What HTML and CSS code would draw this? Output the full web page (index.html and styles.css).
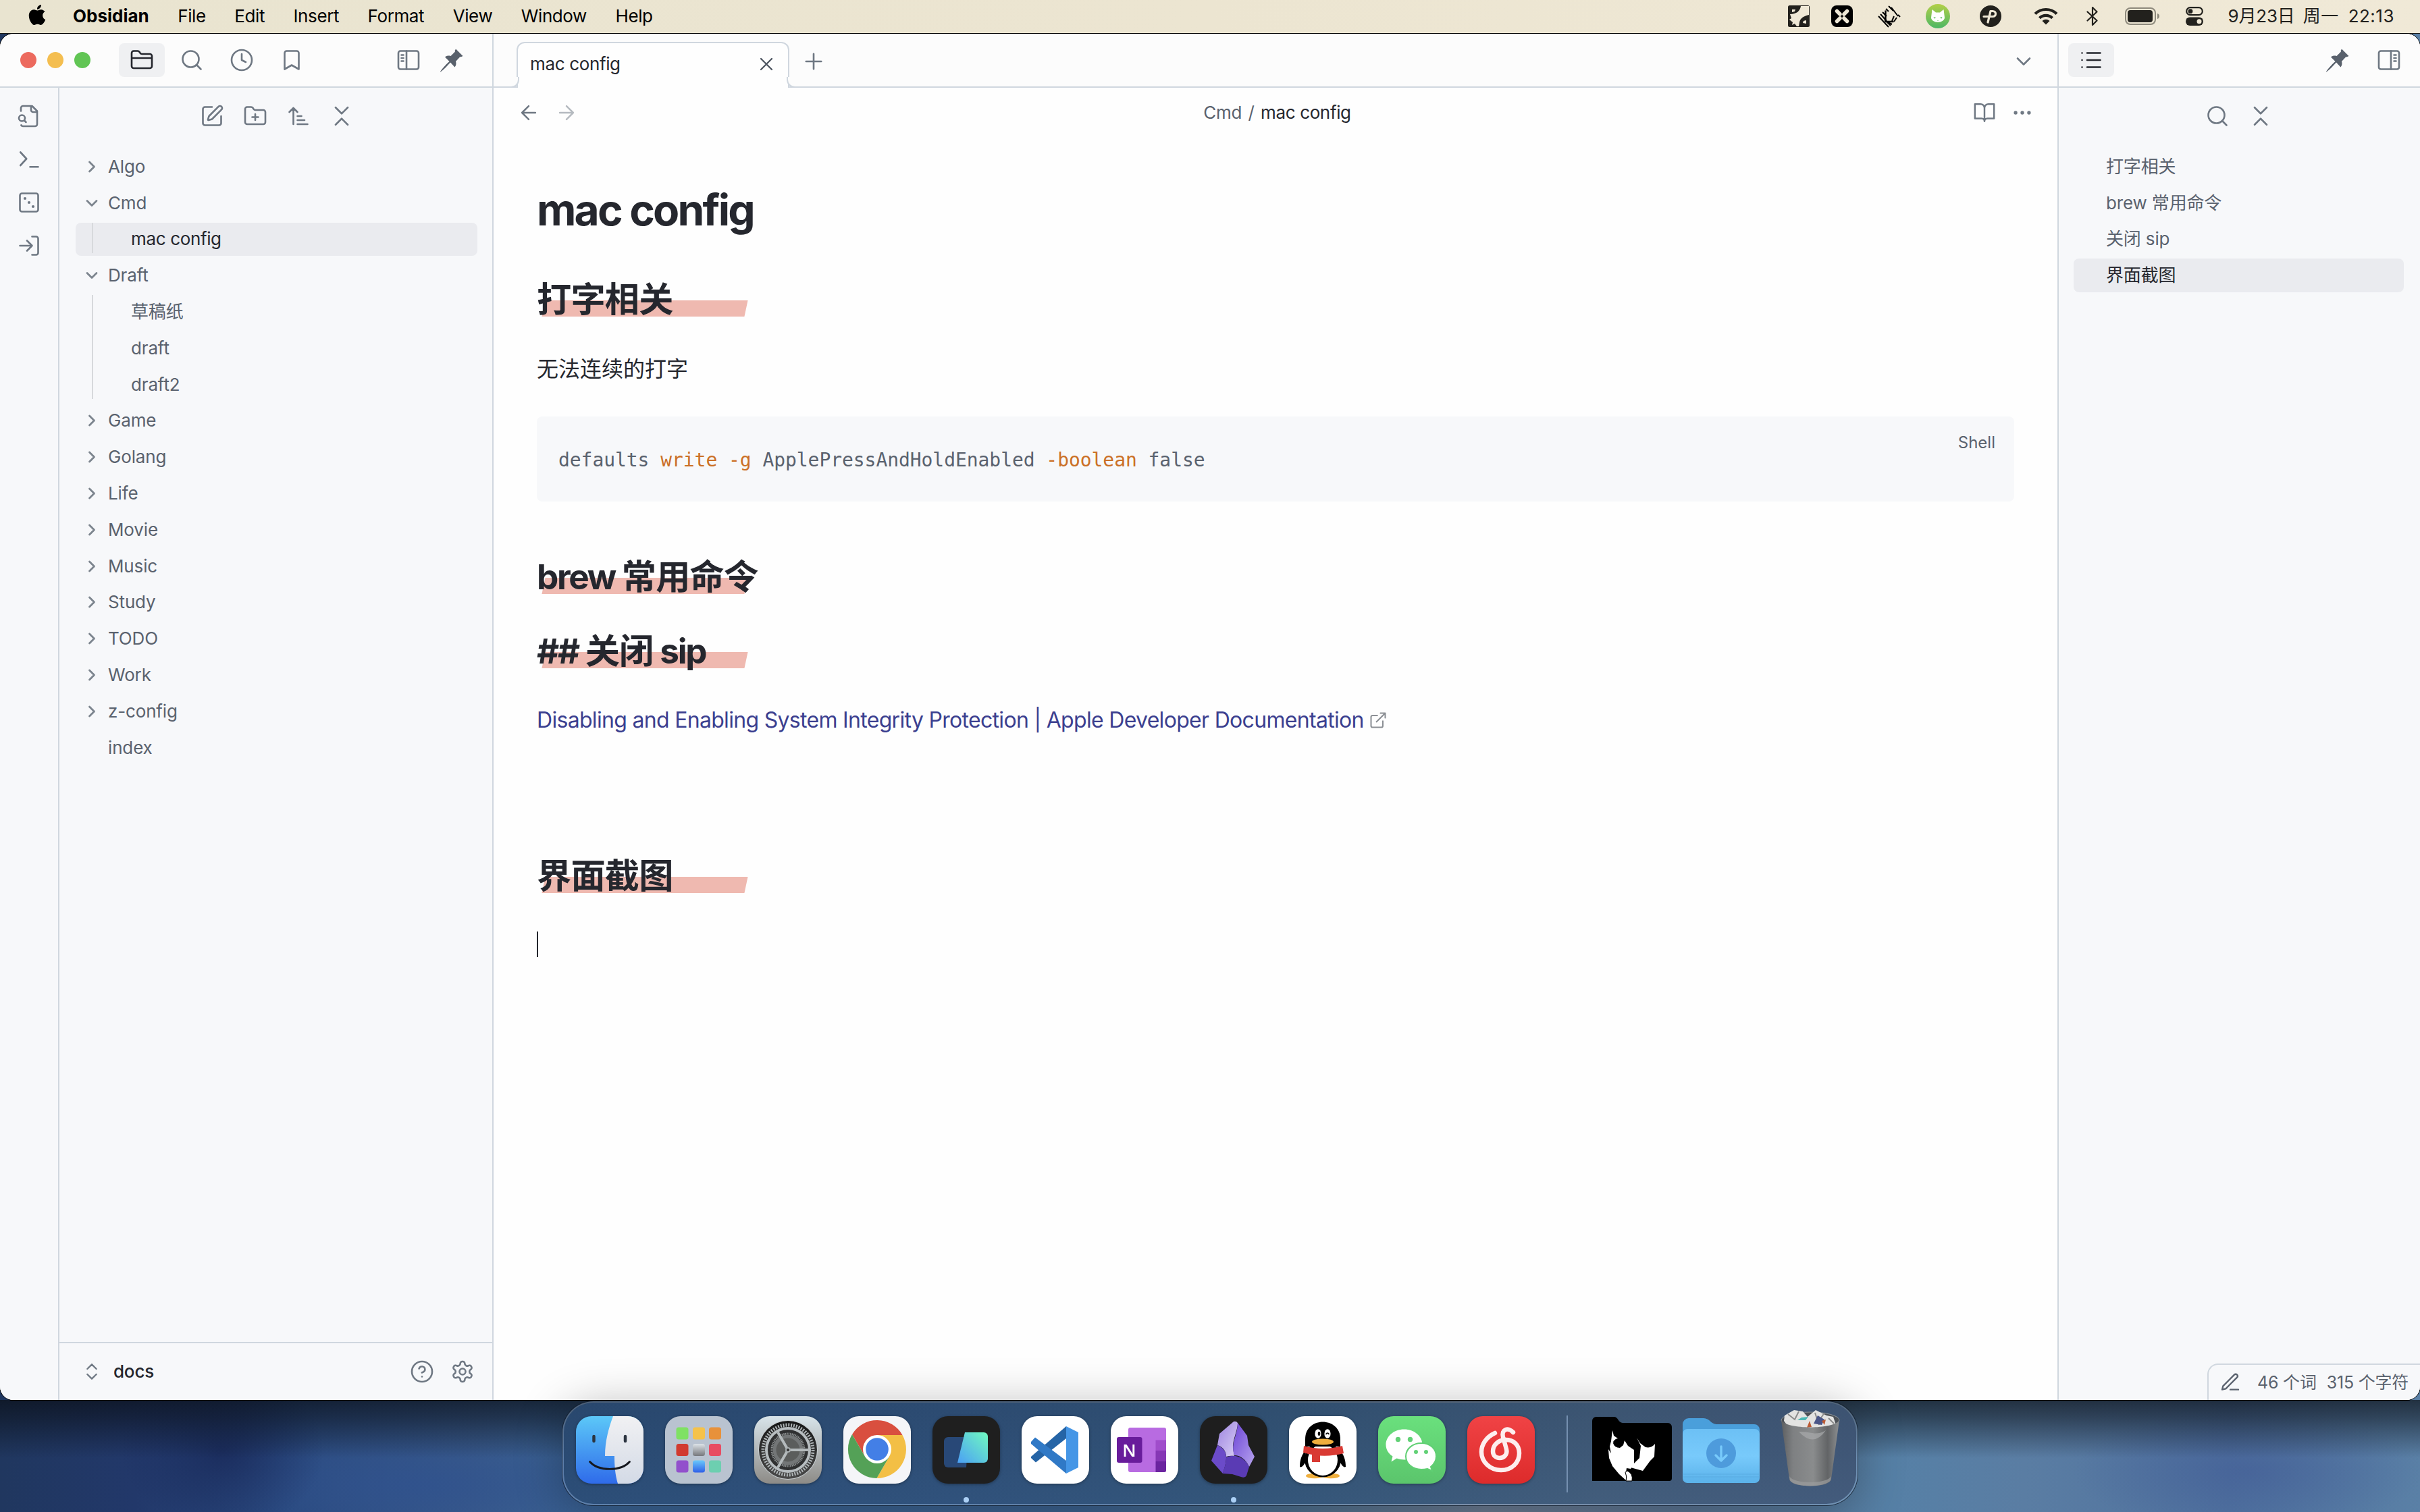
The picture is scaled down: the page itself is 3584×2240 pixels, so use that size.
FILE: index.html
```html
<!DOCTYPE html>
<html lang="zh-CN">
<head>
<meta charset="utf-8">
<title>mac config - docs - Obsidian</title>
<link rel="stylesheet" href="styles.css">
</head>
<body>
<svg class="sprite" aria-hidden="true">
  <symbol id="i-folder" viewBox="0 0 24 24"><path d="M20 20a2 2 0 0 0 2-2V8a2 2 0 0 0-2-2h-7.900a2 2 0 0 1-1.690-.9L9.600 3.900A2 2 0 0 0 7.930 3H4a2 2 0 0 0-2 2v13a2 2 0 0 0 2 2ZM2 10h20"/></symbol>
  <symbol id="i-folder-plus" viewBox="0 0 24 24"><path d="M12 10v6M9 13h6M20 20a2 2 0 0 0 2-2V8a2 2 0 0 0-2-2h-7.900a2 2 0 0 1-1.690-.9L9.600 3.900A2 2 0 0 0 7.930 3H4a2 2 0 0 0-2 2v13a2 2 0 0 0 2 2Z"/></symbol>
  <symbol id="i-search" viewBox="0 0 24 24"><circle cx="11" cy="11" r="8"/><path d="m21 21-4.300-4.300"/></symbol>
  <symbol id="i-clock" viewBox="0 0 24 24"><circle cx="12" cy="12" r="10"/><path d="M12 6v6l4 2"/></symbol>
  <symbol id="i-bookmark" viewBox="0 0 24 24"><path d="m19 21-7-4-7 4V5a2 2 0 0 1 2-2h10a2 2 0 0 1 2 2v16z"/></symbol>
  <symbol id="i-sidebar" viewBox="0 0 24 24"><rect x="2" y="3" width="20" height="18" rx="2"/><path d="M10 3v18M5 7h2M5 10h2M5 13h2"/></symbol>
  <symbol id="i-pin" viewBox="0 0 36 36"><path class="fill" d="M24 1.500 34.500 12l-3 1.500-1-.5-6.500 7c1 3 .5 6-1.500 8.500L16 21.500C11 27 6 32.500 1.500 35.500l-.5-.5C4 30.500 9 25 14.500 20L8 13.500c2.500-2 5.500-2.500 8.500-1.500l6.500-6.500-.5-1z"/></symbol>
  <symbol id="i-x" viewBox="0 0 24 24"><path d="M18 6 6 18M6 6l12 12"/></symbol>
  <symbol id="i-plus" viewBox="0 0 24 24"><path d="M4.500 12h15M12 4.500v15"/></symbol>
  <symbol id="i-down" viewBox="0 0 24 24"><path d="m6 9 6 6 6-6"/></symbol>
  <symbol id="i-right" viewBox="0 0 24 24"><path d="m9 18 6-6-6-6"/></symbol>
  <symbol id="i-updown" viewBox="0 0 24 24"><path d="m7 15 5 5 5-5M7 9l5-5 5 5"/></symbol>
  <symbol id="i-collapse" viewBox="0 0 24 24"><path d="m6 20.500 6-6 6 6M6 3.500l6 6 6-6"/></symbol>
  <symbol id="i-list" viewBox="0 0 24 24"><path d="M8 5h13M8 12h13M8 19h13M3 5h.01M3 12h.01M3 19h.01"/></symbol>
  <symbol id="i-file-search" viewBox="0 0 24 24"><path d="M14 2v4a2 2 0 0 0 2 2h4M4.268 21a2 2 0 0 0 1.727 1H18a2 2 0 0 0 2-2V7l-5-5H6a2 2 0 0 0-2 2v3m5 11-1.500-1.500"/><circle cx="5" cy="14" r="3"/></symbol>
  <symbol id="i-terminal" viewBox="0 0 24 24"><path d="m3.500 18 6-6.500-6-6.500M13 19.500h8"/></symbol>
  <symbol id="i-dice" viewBox="0 0 24 24"><rect x="3" y="3" width="18" height="18" rx="2"/><path class="dots" d="M8 8h.01M12 12h.01M16 16h.01"/></symbol>
  <symbol id="i-login" viewBox="0 0 24 24"><path d="M15 3h4a2 2 0 0 1 2 2v14a2 2 0 0 1-2 2h-4M10 17l5-5-5-5M15 12H3"/></symbol>
  <symbol id="i-edit" viewBox="0 0 24 24"><path d="M12 3H5a2 2 0 0 0-2 2v14a2 2 0 0 0 2 2h14a2 2 0 0 0 2-2v-7M18.375 2.625a1 1 0 0 1 3 3l-9.013 9.014a2 2 0 0 1-.853.505l-2.873.84a.5.5 0 0 1-.62-.62l.84-2.873a2 2 0 0 1 .506-.852z"/></symbol>
  <symbol id="i-sort" viewBox="0 0 24 24"><path d="m3 8 4-4 4 4M7 4v16M11 12h4M11 16h7M11 20h10"/></symbol>
  <symbol id="i-back" viewBox="0 0 24 24"><path d="m12 19-7-7 7-7M19 12H5"/></symbol>
  <symbol id="i-forward" viewBox="0 0 24 24"><path d="M5 12h14M12 5l7 7-7 7"/></symbol>
  <symbol id="i-book" viewBox="0 0 24 24"><path d="M2 3h6a4 4 0 0 1 4 4v14a3 3 0 0 0-3-3H2zM22 3h-6a4 4 0 0 0-4 4v14a3 3 0 0 1 3-3h7z"/></symbol>
  <symbol id="i-more" viewBox="0 0 24 24"><circle cx="12" cy="12" r="1"/><circle cx="19" cy="12" r="1"/><circle cx="5" cy="12" r="1"/></symbol>
  <symbol id="i-help" viewBox="0 0 24 24"><circle cx="12" cy="12" r="10"/><path d="M9.090 9a3 3 0 0 1 5.830 1c0 2-3 3-3 3M12 17h.01"/></symbol>
  <symbol id="i-gear" viewBox="0 0 24 24"><path d="M12.220 2h-.44a2 2 0 0 0-2 2v.18a2 2 0 0 1-1 1.730l-.43.25a2 2 0 0 1-2 0l-.15-.08a2 2 0 0 0-2.730.73l-.22.38a2 2 0 0 0 .73 2.730l.15.1a2 2 0 0 1 1 1.720v.51a2 2 0 0 1-1 1.740l-.15.09a2 2 0 0 0-.73 2.730l.22.38a2 2 0 0 0 2.730.73l.15-.08a2 2 0 0 1 2 0l.43.25a2 2 0 0 1 1 1.730V20a2 2 0 0 0 2 2h.44a2 2 0 0 0 2-2v-.18a2 2 0 0 1 1-1.730l.43-.25a2 2 0 0 1 2 0l.15.08a2 2 0 0 0 2.730-.73l.22-.39a2 2 0 0 0-.73-2.730l-.15-.08a2 2 0 0 1-1-1.740v-.5a2 2 0 0 1 1-1.740l.15-.09a2 2 0 0 0 .73-2.730l-.22-.38a2 2 0 0 0-2.730-.73l-.15.08a2 2 0 0 1-2 0l-.43-.25a2 2 0 0 1-1-1.730V4a2 2 0 0 0-2-2z"/><circle cx="12" cy="12" r="3"/></symbol>
  <symbol id="i-pen" viewBox="0 0 24 24"><path d="M12 20h9M16.500 3.500a2.120 2.120 0 0 1 3 3L7 19l-4 1 1-4Z"/></symbol>
  <symbol id="i-external" viewBox="0 0 24 24"><path d="M15 3h6v6M10 14 21 3M18 13v6a2 2 0 0 1-2 2H5a2 2 0 0 1-2-2V8a2 2 0 0 1 2-2h6"/></symbol>
</svg>

<header class="menubar">
  <svg class="apple" viewBox="0 0 24 24"><path d="M12.152 6.896c-.948 0-2.415-1.078-3.960-1.040-2.040.027-3.910 1.183-4.961 3.014-2.117 3.675-.546 9.103 1.519 12.090 1.013 1.454 2.208 3.090 3.792 3.039 1.520-.065 2.090-.987 3.935-.987 1.831 0 2.350.987 3.960.948 1.637-.026 2.676-1.480 3.676-2.948 1.156-1.688 1.636-3.325 1.662-3.415-.039-.013-3.182-1.221-3.220-4.857-.026-3.040 2.480-4.494 2.597-4.559-1.429-2.090-3.623-2.324-4.390-2.376-2-.156-3.675 1.090-4.610 1.090zM15.530 3.830c.843-1.012 1.400-2.427 1.245-3.830-1.207.052-2.662.805-3.532 1.818-.78.896-1.454 2.338-1.273 3.714 1.338.104 2.715-.688 3.559-1.701"/></svg>
  <nav class="menus"><b>Obsidian</b><span>File</span><span>Edit</span><span>Insert</span><span>Format</span><span>View</span><span>Window</span><span>Help</span></nav>
  <div class="tray">
    <svg class="t-pic" viewBox="0 0 32 32"><rect width="32" height="32" rx="2.500" fill="#22211d"/><path d="M19 1h12v13c-8 2-13 5-14 11l-1 6h-3l-3-4-4 2 1-4-5-4 3-2-2-6C13 13 18 8 19 1Z" fill="#efe8d6"/><path d="M6 6h5l-1 3-4 1zM22 26l1-3 4-1v5z" fill="#efe8d6"/></svg>
    <svg class="t-x" viewBox="0 0 32 32"><rect width="32" height="32" rx="8" fill="#000"/><path d="m8.500 8.500 4.500 4.500M23.500 8.500 19 13M8.500 23.500 13 19M23.500 23.500 19 19" stroke="#efe8d6" stroke-width="5.500" stroke-linecap="round"/></svg>
    <svg class="t-dia" viewBox="0 0 34 34"><path d="M11.500 8.500v16.500h12" fill="none" stroke="#000" stroke-width="2.400"/><path d="M12 6l4 4M16 2l7 7M20 4l10 13M30 15l3 3M28 19l-4 6M24 17l-3 7M7 11l6 6M4 14l9 10M1 17l15 16M10 22l9 9M15 26l6 3" stroke="#000" stroke-width="2" fill="none"/></svg>
    <svg class="t-cat" viewBox="0 0 36 36"><defs><linearGradient id="cat" x1="0" y1="0" x2="0" y2="1"><stop offset="0" stop-color="#b2cf48"/><stop offset="1" stop-color="#4db765"/></linearGradient></defs><circle cx="18" cy="18" r="18" fill="url(#cat)"/><path d="m9.500 8 5.500 4.500h6L26.500 8 28 20c0 4-5 7-10 7S8 24 8 20z" fill="#fff"/><path d="m11.500 19 4 1.500-3 1zm13 0-4 1.500 3 1zM17 24h2l-1 1z" fill="#5cbb5e"/></svg>
    <svg class="t-p" viewBox="0 0 32 32"><circle cx="16" cy="16" r="16" fill="#22211d"/><path d="M6 16.500h13c6 0 6-8 0-8h-3L12 25" fill="none" stroke="#efe8d6" stroke-width="3.200" stroke-linecap="round" stroke-linejoin="round"/></svg>
    <svg class="t-wifi" viewBox="0 0 36 26"><g fill="none" stroke="#22211d" stroke-width="4.200"><path d="M2 9.500a23 23 0 0 1 32 0"/><path d="M8.500 15.800a13.500 13.500 0 0 1 19 0"/></g><path d="M12.500 20a8 8 0 0 1 11 0L18 25.500z" fill="#22211d"/></svg>
    <svg class="t-bt" viewBox="0 0 18 30"><path d="m1.500 8.500 14 13L9 28V2l6.500 6.500-14 13" fill="none" stroke="#22211d" stroke-width="2.200" stroke-linejoin="round" stroke-linecap="round"/></svg>
    <svg class="t-bat" viewBox="0 0 52 26"><rect x="1" y="1" width="44" height="24" rx="7" fill="none" stroke="#8d897c" stroke-width="2"/><rect x="4" y="4" width="37" height="18" rx="4" fill="#22211d"/><path d="M48 9c4 1 4 7 0 8z" fill="#8d897c"/></svg>
    <svg class="t-cc" viewBox="0 0 26 28"><rect x="1.200" y="1.200" width="23.600" height="11" rx="5.500" fill="none" stroke="#22211d" stroke-width="2.200"/><circle cx="7" cy="6.700" r="3.400" fill="#22211d"/><rect y="15.500" width="26" height="12.500" rx="6.200" fill="#22211d"/><circle cx="20" cy="21.700" r="3.500" fill="#efe8d6"/></svg>
    <div class="clock"><span class="date">9月23日</span><span>周一</span><span>22:13</span></div>
  </div>
</header>

<main class="window">
  <section class="left">
    <div class="bar left-bar">
      <div class="lights"><i class="red"></i><i class="amber"></i><i class="green"></i></div>
      <div class="switch">
        <span class="btn on"><svg class="ic"><use href="#i-folder"/></svg></span>
        <span class="btn"><svg class="ic"><use href="#i-search"/></svg></span>
        <span class="btn"><svg class="ic"><use href="#i-clock"/></svg></span>
        <span class="btn"><svg class="ic"><use href="#i-bookmark"/></svg></span>
      </div>
      <svg class="ic push"><use href="#i-sidebar"/></svg>
      <svg class="ic pin"><use href="#i-pin"/></svg>
    </div>
    <div class="left-body">
      <div class="ribbon">
        <svg class="ic"><use href="#i-file-search"/></svg>
        <svg class="ic"><use href="#i-terminal"/></svg>
        <svg class="ic"><use href="#i-dice"/></svg>
        <svg class="ic"><use href="#i-login"/></svg>
      </div>
      <div class="files">
        <div class="tools">
          <svg class="ic"><use href="#i-edit"/></svg>
          <svg class="ic"><use href="#i-folder-plus"/></svg>
          <svg class="ic"><use href="#i-sort"/></svg>
          <svg class="ic"><use href="#i-collapse"/></svg>
        </div>
        <div class="tree">
          <div class="row"><svg class="ch"><use href="#i-right"/></svg>Algo</div>
          <div class="row"><svg class="ch"><use href="#i-down"/></svg>Cmd</div>
          <div class="kids"><div class="row on">mac config</div></div>
          <div class="row"><svg class="ch"><use href="#i-down"/></svg>Draft</div>
          <div class="kids"><div class="row">草稿纸</div><div class="row">draft</div><div class="row">draft2</div></div>
          <div class="row"><svg class="ch"><use href="#i-right"/></svg>Game</div>
          <div class="row"><svg class="ch"><use href="#i-right"/></svg>Golang</div>
          <div class="row"><svg class="ch"><use href="#i-right"/></svg>Life</div>
          <div class="row"><svg class="ch"><use href="#i-right"/></svg>Movie</div>
          <div class="row"><svg class="ch"><use href="#i-right"/></svg>Music</div>
          <div class="row"><svg class="ch"><use href="#i-right"/></svg>Study</div>
          <div class="row"><svg class="ch"><use href="#i-right"/></svg>TODO</div>
          <div class="row"><svg class="ch"><use href="#i-right"/></svg>Work</div>
          <div class="row"><svg class="ch"><use href="#i-right"/></svg>z-config</div>
          <div class="row">index</div>
        </div>
        <div class="vault">
          <svg class="ch2"><use href="#i-updown"/></svg><span class="name">docs</span>
          <svg class="ic push"><use href="#i-help"/></svg>
          <svg class="ic"><use href="#i-gear"/></svg>
        </div>
      </div>
    </div>
  </section>

  <section class="center">
    <div class="bar tabs">
      <div class="tab"><span>mac config</span><svg class="x"><use href="#i-x"/></svg></div>
      <svg class="plus"><use href="#i-plus"/></svg>
      <svg class="more-tabs"><use href="#i-down"/></svg>
    </div>
    <div class="view-head">
      <div class="arrows"><svg><use href="#i-back"/></svg><svg class="dim"><use href="#i-forward"/></svg></div>
      <div class="crumb"><span>Cmd</span><span>/</span><b>mac config</b></div>
      <div class="acts"><svg><use href="#i-book"/></svg><svg><use href="#i-more"/></svg></div>
    </div>
    <article class="note">
      <h1>mac config</h1>
      <h2 class="s1"><span>打字相关</span></h2>
      <p>无法连续的打字</p>
      <pre><code>defaults <em>write</em> <em>-g</em> ApplePressAndHoldEnabled <em>-boolean</em> false</code><span class="lang">Shell</span></pre>
      <h2 class="s2"><span><span class="lat">brew </span>常用命令</span></h2>
      <h2 class="s3"><span><span class="lat">## </span>关闭<span class="lat"> sip</span></span></h2>
      <p class="link"><a>Disabling and Enabling System Integrity Protection | Apple Developer Documentation</a><svg><use href="#i-external"/></svg></p>
      <h2 class="s4"><span>界面截图</span></h2>
      <div class="caret"></div>
    </article>
  </section>

  <section class="right">
    <div class="bar right-bar">
      <span class="btn on"><svg class="ic"><use href="#i-list"/></svg></span>
      <svg class="ic pin push"><use href="#i-pin"/></svg>
      <svg class="ic flip"><use href="#i-sidebar"/></svg>
    </div>
    <div class="tools">
      <svg class="ic"><use href="#i-search"/></svg>
      <svg class="ic"><use href="#i-collapse"/></svg>
    </div>
    <div class="outline">
      <div class="row">打字相关</div>
      <div class="row">brew 常用命令</div>
      <div class="row">关闭 sip</div>
      <div class="row on">界面截图</div>
    </div>
    <div class="status"><svg><use href="#i-pen"/></svg><span>46 个词</span><span>315 个字符</span></div>
  </section>
</main>

<aside class="dock">
  <svg class="app" viewBox="0 0 100 100">
    <defs><linearGradient id="fb" x1="0" y1="0" x2="0" y2="1"><stop offset="0" stop-color="#5cc8f8"/><stop offset="1" stop-color="#2f6bea"/></linearGradient><linearGradient id="fw" x1="0" y1="0" x2="0" y2="1"><stop offset="0" stop-color="#f1f1f3"/><stop offset="1" stop-color="#d3dae6"/></linearGradient><clipPath id="sq"><rect width="100" height="100" rx="23"/></clipPath></defs>
    <g clip-path="url(#sq)"><rect width="100" height="100" fill="url(#fb)"/><path d="M55 0C49 16 43 36 43 59h14c0 14 1 28 5 41h38V0z" fill="url(#fw)"/></g>
    <path d="M26.500 30v7M73 30v7" stroke="#2b3440" stroke-width="4.500" stroke-linecap="round"/><path d="M20.500 67.500C33 82 67 82 79.500 67.500" fill="none" stroke="#15181f" stroke-width="2.800" stroke-linecap="round"/>
  </svg>
  <svg class="app" viewBox="0 0 100 100">
    <defs><linearGradient id="lb" x1="0" y1="0" x2="0" y2="1"><stop offset="0" stop-color="#69c8fb"/><stop offset="1" stop-color="#2f60e8"/></linearGradient><linearGradient id="lg" x1="0" y1="0" x2="0" y2="1"><stop offset="0" stop-color="#dde3e8"/><stop offset="1" stop-color="#76787c"/></linearGradient></defs>
    <rect width="100" height="100" rx="23" fill="#b9c3d0"/>
    <rect x="16.500" y="16.500" width="18" height="18" rx="3.500" fill="#7fe163"/><rect x="41" y="16.500" width="18" height="18" rx="3.500" fill="#f5c24a"/><rect x="65" y="16.500" width="18" height="18" rx="3.500" fill="#e8913a"/>
    <rect x="16.500" y="41" width="18" height="18" rx="3.500" fill="#d13a2f"/><rect x="41" y="41" width="18" height="18" rx="3.500" fill="url(#lg)"/><rect x="65" y="41" width="18" height="18" rx="3.500" fill="#e84c62"/>
    <rect x="16.500" y="65.500" width="18" height="18" rx="3.500" fill="#9250cc"/><rect x="41" y="65.500" width="18" height="18" rx="3.500" fill="url(#lb)"/><rect x="65" y="65.500" width="18" height="18" rx="3.500" fill="#6dcfb0"/>
  </svg>
  <svg class="app" viewBox="0 0 100 100">
    <defs><linearGradient id="sg" x1="0" y1="0" x2="0" y2="1"><stop offset="0" stop-color="#d8e4ea"/><stop offset="1" stop-color="#8d8b87"/></linearGradient><linearGradient id="sd" x1="0" y1="0" x2="0" y2="1"><stop offset="0" stop-color="#161616"/><stop offset="1" stop-color="#4a4a4a"/></linearGradient></defs>
    <rect width="100" height="100" rx="23" fill="url(#sg)"/><circle cx="50" cy="50" r="44" fill="#c7cdd0"/><circle cx="50" cy="50" r="43" fill="url(#sd)"/>
    <circle cx="50" cy="50" r="37" fill="none" stroke="#aeb4b6" stroke-width="5" stroke-dasharray="2 1.875"/>
    <circle cx="50" cy="50" r="32" fill="#2f3031" stroke="#b7bdc0" stroke-width="4"/>
    <circle cx="50" cy="50" r="24" fill="none" stroke="#8b8f90" stroke-width="3" stroke-dasharray="1.500 1.013"/><circle cx="50" cy="50" r="20" fill="#5b5d5c" stroke="#737677" stroke-width="5"/>
    <path d="M50 50h31M50 50 35 24M50 50 35 76" stroke="#b4babc" stroke-width="4"/><circle cx="50" cy="50" r="4" fill="#a8aeb0"/><circle cx="50" cy="50" r="2" fill="#303030"/>
  </svg>
  <svg class="app" viewBox="0 0 100 100">
    <rect width="100" height="100" rx="23" fill="#f4f5f8"/>
    <path d="M13 27A43 43 0 0 1 87.500 28H50v21L31.800 59.500z" fill="#d94f3f"/><path d="M87.500 28A43 43 0 0 1 49.400 92L68.200 59.500 50 49V28z" fill="#f3bf45"/><path d="M49.400 92A43 43 0 0 1 13 27l18.800 32.500L50 49l18.200 10.500z" fill="#54a157"/>
    <circle cx="50" cy="49" r="21" fill="#fff"/><circle cx="50" cy="49" r="16.800" fill="#437fe6"/>
  </svg>
  <div class="slot running">
    <svg class="app" viewBox="0 0 100 100">
      <defs><linearGradient id="cy" x1="0" y1="1" x2="1" y2="0"><stop offset="0" stop-color="#4b9ff5"/><stop offset="1" stop-color="#70fac0"/></linearGradient></defs>
      <rect width="100" height="100" rx="23" fill="#1f1f1f"/><path d="M23 31h30l-3 45H23a6 6 0 0 1-6-6V37a6 6 0 0 1 6-6Z" fill="#284877"/><path d="M48 24h28a6 6 0 0 1 6 6v33a6 6 0 0 1-6 6H37z" fill="url(#cy)"/>
    </svg>
  </div>
  <svg class="app" viewBox="0 0 100 100">
    <rect width="100" height="100" rx="23" fill="#fff"/>
    <path d="M66 15v18L21 68.500l-7-6.500v-2z" fill="#2564a6"/><path d="M20 31.500 66 66v19L14 41v-3z" fill="#3079c6"/><path d="m66 15 18 9v52l-18 9z" fill="#4596e6"/>
  </svg>
  <svg class="app" viewBox="0 0 100 100">
    <rect width="100" height="100" rx="23" fill="#fff"/><rect x="26" y="17" width="56" height="66" rx="3" fill="#b86be1"/><path d="M66.500 35.500H82V51H66.500z" fill="#a04dcb"/><path d="M66.500 51H82v16H66.500z" fill="#8637b5"/><path d="M66.500 67H82v13a3 3 0 0 1-3 3H66.500z" fill="#6b249f"/><rect x="9" y="31" width="37.500" height="38" rx="3" fill="#681c9b"/><text x="27.500" y="60" text-anchor="middle" class="n">N</text>
  </svg>
  <div class="slot running">
    <svg class="app" viewBox="0 0 100 100">
      <defs><linearGradient id="o1" x1="0" y1="0" x2="1" y2="1"><stop offset="0" stop-color="#9c82e0"/><stop offset="1" stop-color="#d9d0f5"/></linearGradient><linearGradient id="o2" x1="0" y1="0" x2="1" y2="1"><stop offset="0" stop-color="#6b43d6"/><stop offset="1" stop-color="#b7a4ee"/></linearGradient></defs>
      <rect width="100" height="100" rx="23" fill="#1e1e1e"/>
      <path d="M50 8q4-1 6 2c0 12-8 25-7 38l2 11q-6-1-12 1C39 52 34 45 26 43l3-17z" fill="url(#o1)"/><path d="M56 10 70 29l2 14 9 17-8 15C68 64 60 58 51 58c-6-18 5-30 5-48Z" fill="url(#o2)"/><path d="M26 43c9 4 13 10 13 18 0 9-3 17-5 24L17 66z" fill="#6b4bc9"/><path d="M39 61c14-6 28 1 34 14l-4 13q-2 4-8 2L48 86l-14-1c2-8 5-15 5-24Z" fill="#5a3bb4"/>
    </svg>
  </div>
  <svg class="app" viewBox="0 0 100 100">
    <rect width="100" height="100" rx="23" fill="#fff"/><ellipse cx="38" cy="88.500" rx="13" ry="3.800" fill="#efaf3e"/><ellipse cx="62" cy="88.500" rx="13" ry="3.800" fill="#efaf3e"/>
    <path d="M25 50c-7 8-9 16-9 25 3 2 6-3 8-6zM75 50c7 8 9 16 9 25-3 2-6-3-8-6z" fill="#000"/><ellipse cx="50" cy="64" rx="27" ry="26.500" fill="#000"/><ellipse cx="50" cy="65" rx="22" ry="23" fill="#fff"/>
    <path d="M24 45V34C24 0 76 0 76 34v11z" fill="#000"/><path d="M22 44q28 8 57 0l2 11q-30 8-60-1z" fill="#d93a33"/><path d="M34 55h12v13H34z" fill="#d93a33"/>
    <ellipse cx="43" cy="26" rx="4.600" ry="6.800" fill="#fff"/><ellipse cx="57" cy="26" rx="4.600" ry="6.800" fill="#fff"/><ellipse cx="44.500" cy="26" rx="1.800" ry="3" fill="#000"/><path d="M54.500 27q2.500-4 5 0" fill="none" stroke="#000" stroke-width="1.600"/><ellipse cx="50" cy="38" rx="16" ry="4.500" fill="#efaf3e"/>
  </svg>
  <svg class="app" viewBox="0 0 100 100">
    <defs><linearGradient id="wc" x1="0" y1="0" x2="0" y2="1"><stop offset="0" stop-color="#6ae07d"/><stop offset="1" stop-color="#5bc56c"/></linearGradient></defs>
    <rect width="100" height="100" rx="23" fill="url(#wc)"/><path d="M38.500 19.500c-15 0-27 10-27 23 0 7 4 13 10 17l-2 8 8-5q5 2 11 2c15 0 27-9 27-22s-12-23-27-23Z" fill="#fff"/><path d="M64 40c-13 0-23 8.500-23 19.500S51 79 64 79q5 0 9-1l7 3-2-6c5-4 8-9 8-15.500C86 48.500 77 40 64 40Z" fill="#fff" stroke="#60cf73" stroke-width="2"/><g fill="#62d176"><circle cx="29.500" cy="34.500" r="3.700"/><circle cx="47.500" cy="34.500" r="3.700"/><circle cx="56" cy="53" r="3"/><circle cx="71" cy="53" r="3"/></g>
  </svg>
  <svg class="app" viewBox="0 0 100 100">
    <defs><linearGradient id="ne" x1="0" y1="0" x2="0" y2="1"><stop offset="0" stop-color="#f04345"/><stop offset="1" stop-color="#dd2b2b"/></linearGradient></defs>
    <rect width="100" height="100" rx="23" fill="url(#ne)"/><path d="M41 25C28 31 21 42 21 53c0 15 13 27 29 27s27-11 27-25c0-13-9-20-20-20-11 0-19 8-19 17 0 6 4 10 10 10s12-5 10-13l-5-18c-3-12 8-15 15-7" fill="none" stroke="#fdeeee" stroke-width="6.500" stroke-linecap="round"/>
  </svg>
  <i class="sep"></i>
  <svg class="face" viewBox="0 0 118 98">
    <path d="M6 2h27c5 0 6 9 12 9h67a6 6 0 0 1 6 6v76a4 4 0 0 1-4 4H0V8a6 6 0 0 1 6-6Z" fill="#000"/>
    <path d="m30 22 2 8 6 4q-6 1-7 7 2 7 10 7l5-4 2-7 5 8 9 6v21l-5 7-6-1-1 6v12l-10-9-10-12-5-12-1-13 4 6-2-10 2-8z" fill="#fff"/>
    <path d="m66 33 5 8 8 6q9 2 14-5l-1 19-6 6-11 15-11-3-7-2 5-6 8-8 2-18z" fill="#fff"/>
    <path d="M32 38q5 6 12 1M74 39q8 7 16 1" fill="none" stroke="#000" stroke-width="2.200"/><path d="M52 81l14 3" stroke="#000" stroke-width="2"/>
    <path d="M52 82q9 4 7 15h-9q2-6-1-13z" fill="#fff" stroke="#000" stroke-width="1"/>
  </svg>
  <svg class="dl" viewBox="0 0 114 98">
    <defs><linearGradient id="df" x1="0" y1="0" x2="0" y2="1"><stop offset="0" stop-color="#6cc0f5"/><stop offset=".5" stop-color="#78cafb"/><stop offset="1" stop-color="#5bb2ea"/></linearGradient></defs>
    <path d="M9 1h22c9 0 11 9 19 9h56a8 8 0 0 1 8 8v20H0V10a9 9 0 0 1 9-9Z" fill="#4a9fdb"/><rect y="17" width="114" height="80" rx="7" fill="url(#df)"/><path d="M1 84h112M1 88h112" stroke="#58abe2" stroke-width="1"/><circle cx="57" cy="53" r="22" fill="#4e9bdc"/><path d="M57 43v20M49 56l8 8 8-8" fill="none" stroke="#78cafb" stroke-width="3.400" stroke-linecap="round" stroke-linejoin="round"/>
  </svg>
  <svg class="trash" viewBox="0 0 90 118">
    <defs><linearGradient id="tr" x1="0" y1="0" x2="1" y2="0"><stop offset="0" stop-color="#5c5e60"/><stop offset=".2" stop-color="#7e8082"/><stop offset=".55" stop-color="#8a8c8d"/><stop offset=".8" stop-color="#626466"/><stop offset="1" stop-color="#8d9092"/></linearGradient></defs>
    <ellipse cx="45" cy="17" rx="43" ry="12" fill="#4c5157" stroke="#8d949b"/><path d="m7 10 14-8 13 2 7 8 12-10 16 8 10 2 4 12-18 8H16L6 18z" fill="#e3e3e2"/><path d="m12 8 10 8 6-12M52 6l6 18M66 6l-8 12M72 14l8 8" stroke="#8c8c8c" stroke-width="2" fill="none"/><path d="m26 17 6-4 10-1-4 5z" fill="#4bb7b4"/><path d="m50 22 6-12 10 6-4 8z" fill="#4a5688"/><path d="m40 28 4-10 3 9zM62 18l6-2-2 8z" fill="#bc5b34"/>
    <path d="M2 17c8 14 78 14 86 0L76 104c-1 14-61 14-62 0z" fill="url(#tr)"/><path d="M14 100c6 12 56 12 62 0l-1 6c-6 11-54 11-60 0z" fill="#9b9d9e" opacity=".7"/><path d="M28 34q22 24 40-2-10 6-20 4t-20-2Z" fill="#a8aaab" opacity=".7"/>
  </svg>
</aside>
</body>
</html>
```
FILE: styles.css
```css
* { box-sizing: border-box; margin: 0; padding: 0; }

body {
  width: 3584px;
  height: 2240px;
  overflow: hidden;
  display: flex;
  flex-direction: column;
  font-family: Inter, "Noto Sans CJK SC", sans-serif;
  font-size: 26px;
  line-height: 34px;
  color: #5a626e;
  background:
    linear-gradient(to bottom, transparent 2074px, rgba(8, 12, 18, .68) 2074px, rgba(8, 12, 18, .5) 2100px, transparent 2160px),
    radial-gradient(150px 120px at 330px 2150px, rgba(24, 40, 88, .8), transparent),
    radial-gradient(320px 80px at 620px 2200px, rgba(48, 82, 142, .8), transparent),
    radial-gradient(260px 90px at 3330px 2180px, rgba(66, 92, 150, .6), transparent),
    linear-gradient(to right, #20375f 0, #22386a 200px, #2a4a80 420px, #38598a 700px, #3b6596 900px, #3c6391 1600px, #4d7090 1900px, #6b7c93 2200px, #5a7594 2500px, #5680a6 2800px, #5a7da3 3000px, #4f719e 3300px, #5a80a6 3584px);
}

svg { display: block; flex: none; }
.sprite { position: absolute; width: 0; height: 0; }

/* menu bar */
.menubar {
  height: 50px;
  flex: none;
  display: flex;
  align-items: center;
  padding: 0 38px 2px 40px;
  background: linear-gradient(to right, #e9e4d0, #ece5d1 50%, #f0e9d7);
  border-bottom: 1px solid #1a1916;
  color: #000;
}
.apple { width: 30px; height: 30px; margin-top: -3px; fill: #000; }
.menus { display: flex; gap: 42.500px; margin-left: 38px; line-height: 44px; letter-spacing: -.4px; }
.menus b { font-weight: 700; letter-spacing: 0; }
.tray { display: flex; align-items: center; margin-left: auto; color: #22211d; }
.t-pic, .t-x, .t-p { width: 32px; height: 32px; }
.t-x { margin-left: 32px; }
.t-dia { width: 34px; height: 34px; margin-left: 37px; }
.t-cat { width: 36px; height: 36px; margin-left: 37px; }
.t-p { margin-left: 44px; }
.t-wifi { width: 36px; height: 26px; margin-left: 48px; }
.t-bt { width: 18px; height: 30px; margin-left: 42px; }
.t-bat { width: 52px; height: 26px; margin-left: 39px; }
.t-cc { width: 26px; height: 28px; margin-left: 38px; }
.clock { display: flex; gap: 14px; margin-left: 37px; letter-spacing: .5px; }
.clock .date { letter-spacing: -.2px; margin-right: -2px; }

/* window */
.window {
  height: 2024px;
  flex: none;
  display: flex;
  border-radius: 20px;
  overflow: hidden;
  background: #fefefe;
  box-shadow: 0 0 0 1px #000;
}
.bar {
  height: 80px;
  flex: none;
  display: flex;
  align-items: center;
  background: #fcfcfc;
  border-bottom: 2px solid #d0d7df;
}
.ic, .ch, .ch2, .tab svg, .plus, .more-tabs, .view-head svg, .status svg, .link svg {
  fill: none;
  stroke: #6f7883;
  stroke-width: 1.75;
  stroke-linecap: round;
  stroke-linejoin: round;
}
.ic { width: 36px; height: 36px; }
.push { margin-left: auto; }
.pin { fill: #59616c; stroke: none; }
.dots { stroke-width: 2.800; }
.flip { transform: scaleX(-1); }
.btn { width: 68px; height: 50px; display: grid; place-items: center; border-radius: 8px; }
.btn.on { background: #eff0f2; }
.btn.on .ic { stroke: #25272e; }

.left { width: 731px; flex: none; display: flex; flex-direction: column; border-right: 2px solid #d0d7df; }
.left-bar { padding: 0 42px 0 30px; }
.lights { display: flex; gap: 16px; }
.lights i { width: 24px; height: 24px; border-radius: 50%; }
.red { background: #ec6a5e; }
.amber { background: #f4be50; }
.green { background: #61c554; }
.switch { display: flex; gap: 6px; margin-left: 42px; }
.left-bar .pin { margin-left: 28px; }
.left-body { flex: 1; display: flex; background: #f7f8fa; }
.ribbon {
  width: 88px;
  display: flex;
  flex-direction: column;
  align-items: center;
  gap: 28px;
  padding-top: 24px;
  border-right: 2px solid #d0d7df;
}
.files { flex: 1; display: flex; flex-direction: column; }
.tools { display: flex; justify-content: center; gap: 28px; padding-top: 24px; height: 92px; flex: none; }
.files .tools { padding-left: 2px; }
.right .tools { padding-right: 2px; }
.tree { flex: 1; padding: 0 22px 0 24px; }
.row {
  position: relative;
  height: 49.800px;
  margin-bottom: 4px;
  padding-left: 48px;
  display: flex;
  align-items: center;
  border-radius: 8px;
  letter-spacing: -.15px;
}
.row.on { background: #eaebef; color: #25272e; }
.ch { position: absolute; left: 10px; width: 28px; height: 28px; stroke: #7d858e; stroke-width: 2.400; }
.kids { position: relative; }
.kids .row { padding-left: 82px; }
.kids .row.on { letter-spacing: -.35px; }
.kids::after { content: ""; position: absolute; left: 24px; top: 0; bottom: 4px; width: 2px; background: #d7d9dc; }
.vault {
  height: 86px;
  flex: none;
  display: flex;
  align-items: center;
  padding: 0 26px 0 32px;
  border-top: 2px solid #d0d7df;
}
.ch2 { width: 32px; height: 32px; }
.vault .name { margin-left: 16px; color: #25272e; font-weight: 500; letter-spacing: -.2px; }
.vault .ic + .ic { margin-left: 24px; }

/* editor */
.center { flex: 1; display: flex; flex-direction: column; background: #fefefe; min-width: 0; }
.tabs { align-items: stretch; }
.tab {
  position: relative;
  width: 404px;
  height: 68px;
  margin: 12px 0 0 34px;
  padding: 0 18px 4px;
  display: flex;
  align-items: center;
  justify-content: space-between;
  background: #fefefe;
  border: 2px solid #d0d7df;
  border-bottom: 0;
  border-radius: 12px 12px 0 0;
  color: #25272e;
  letter-spacing: -.35px;
}
.tab::before, .tab::after {
  content: "";
  position: absolute;
  bottom: 0;
  width: 14px;
  height: 14px;
  border-bottom: 2px solid #d0d7df;
  background: #fcfcfc;
}
.tab::before { left: -14px; border-right: 2px solid #d0d7df; border-bottom-right-radius: 12px; }
.tab::after { right: -14px; border-left: 2px solid #d0d7df; border-bottom-left-radius: 12px; }
.tab .x { width: 32px; height: 32px; stroke: #4f5762; margin-right: -2px; }
.plus { width: 36px; height: 36px; margin: 23px 0 0 18px; }
.more-tabs { width: 36px; height: 36px; margin: 23px 32px 0 auto; }
.view-head { height: 74px; flex: none; display: flex; align-items: center; padding: 0 35px; }
.view-head svg { width: 34px; height: 34px; }
.arrows, .acts { display: flex; gap: 22px; flex: 1; }
.acts { justify-content: flex-end; }
.dim { opacity: .5; }
.crumb { display: flex; gap: 9.500px; padding-left: 5px; letter-spacing: -.35px; }
.crumb b { font-weight: 400; color: #25272e; }
.note { padding: 67px 64px 0; display: flex; flex-direction: column; color: #25272e; }
h1 { height: 80px; line-height: 80px; font-size: 64px; font-weight: 700; letter-spacing: -2.800px; }
h2 { position: relative; height: 64px; line-height: 64px; font-size: 51.200px; font-weight: 700; letter-spacing: -.015em; }
h2 span { position: relative; }
h2 .lat { letter-spacing: -.045em; }
h2::before {
  content: "";
  position: absolute;
  left: 10px;
  top: 34px;
  width: 300px;
  height: 24px;
  transform: skewX(-12deg);
  background: #efb9b0;
}
.note p { height: 48px; line-height: 48px; font-size: 32px; }
.s1 { margin-top: 60px; }
.s1 + p { margin-top: 48px; }
pre {
  height: 126px;
  margin-top: 46px;
  padding: 0 28px 0 32px;
  display: flex;
  align-items: center;
  justify-content: space-between;
  border-radius: 8px;
  background: #f7f8fa;
  color: #5a626e;
}
code { padding-top: 3px; font: 28px/42px "DejaVu Sans Mono", monospace; letter-spacing: -.06px; }
code em { font-style: normal; color: #cb7026; }
.lang { align-self: flex-start; margin-top: 23px; font: 24px/32px Inter, sans-serif; }
.s2 { margin-top: 79px; }
.s3 { margin-top: 46px; }
.note .link { margin-top: 47px; display: flex; align-items: center; color: #3b3f8f; letter-spacing: -.69px; }
.link svg { width: 28px; height: 28px; margin-left: 7px; stroke: #8b8f94; }
.s4 { margin-top: 174px; }
.caret { width: 2px; height: 38px; margin-top: 51px; background: #25272e; }

/* right pane */
.right { width: 537px; flex: none; display: flex; flex-direction: column; background: #f7f8fa; border-left: 2px solid #d0d7df; }
.right-bar { padding: 0 28px 0 14px; }
.right-bar .flip { margin-left: 40px; }
.outline { flex: 1; padding: 0 24px 0 22px; }
.status {
  width: 315px;
  height: 54px;
  align-self: flex-end;
  display: flex;
  align-items: center;
  padding: 0 0 0 16px;
  border: 2px solid #d0d7df;
  border-width: 2px 0 0 2px;
  border-radius: 16px 0 0 0;
  font-size: 25px;
}
.status svg { width: 32px; height: 32px; stroke: #5a626e; }
.status span { margin-left: 15px; white-space: nowrap; letter-spacing: -.2px; }
.status svg + span { margin-left: 24px; }

/* dock, floating over the window's lower edge */
.dock {
  position: absolute;
  left: 833px;
  top: 2076px;
  width: 1918px;
  height: 154px;
  display: flex;
  padding: 20px 0 0 18px;
  border-radius: 46px;
  border: 2px solid rgba(150, 175, 205, .4);
  background: linear-gradient(to bottom, rgba(20, 30, 45, .14), transparent), linear-gradient(to right, #2c4e78, #30527c 30%, #34567a 55%, #425d7c 80%, #435b7c);
  background-clip: padding-box;
  box-shadow: 0 0 0 1px rgba(15, 25, 40, .7), 0 10px 70px rgba(0, 0, 0, .3);
}
.app { width: 100px; height: 100px; margin-right: 32px; filter: drop-shadow(0 1px 2px rgba(0, 0, 0, .35)); }
.slot { position: relative; }
.running::after { content: ""; position: absolute; left: 46px; top: 120px; width: 8px; height: 8px; border-radius: 50%; background: #acd0f5; }
.n { font: 600 26px "Open Sans", sans-serif; fill: #fff; }
.sep { width: 2px; height: 114px; margin: -1px 0 0 15px; background: #7590b0; }
.face { width: 118px; height: 98px; margin: -1px 0 0 36px; }
.dl { width: 114px; height: 98px; margin: 2px 0 0 16px; }
.trash { width: 90px; height: 118px; margin: -11px 0 0 30px; }
```
